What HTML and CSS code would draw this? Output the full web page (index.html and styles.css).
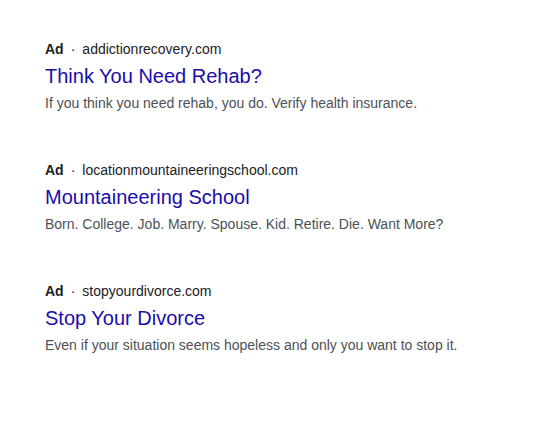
FILE: index.html
```html
<!doctype html>
<html>
<head>
   <title>Ads</title>
   <meta charset="utf-8">
   <link rel="stylesheet" href="styles.css">
</head>
<body>

   <div class="wrap">

      <div class="ad">
         <div class="ad-top"><strong>Ad</strong><span class="dot">&middot;</span><span class="url">addictionrecovery.com</span></div>
         <a class="ad-title" href="#">Think You Need Rehab?</a>
         <p class="ad-desc">If you think you need rehab, you do. Verify health insurance.</p>
      </div>

      <div class="ad">
         <div class="ad-top"><strong>Ad</strong><span class="dot">&middot;</span><span class="url">locationmountaineeringschool.com</span></div>
         <a class="ad-title" href="#">Mountaineering School</a>
         <p class="ad-desc">Born. College. Job. Marry. Spouse. Kid. Retire. Die. Want More?</p>
      </div>

      <div class="ad">
         <div class="ad-top"><strong>Ad</strong><span class="dot">&middot;</span><span class="url">stopyourdivorce.com</span></div>
         <a class="ad-title" href="#">Stop Your Divorce</a>
         <p class="ad-desc">Even if your situation seems hopeless and only you want to stop it.</p>
      </div>

   </div>

</body>
</html>
```

FILE: styles.css
```css
body{
   margin: 0;
   background: #fff;
   font-family: Arial, "Liberation Sans", sans-serif;
}

.wrap{
   padding: 39px 45px 0;
   display: flex;
   flex-direction: column;
   gap: 46px;
}

.ad-top{
   font-size: 14px;
   line-height: 20px;
   color: #202124;
}

.ad-top strong{
   font-weight: bold;
}

.dot{
   padding: 0 7px;
}

.ad-title{
   display: block;
   font-size: 20px;
   line-height: 26px;
   margin-top: 4px;
   color: #1a0dab;
   text-decoration: none;
}

.ad-desc{
   margin: 3px 0 0;
   font-size: 14px;
   line-height: 22px;
   color: #4d5156;
}
```
